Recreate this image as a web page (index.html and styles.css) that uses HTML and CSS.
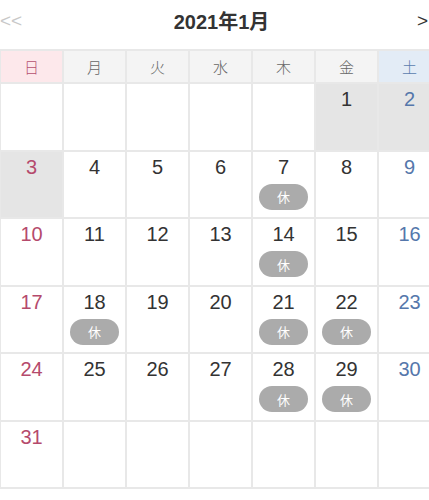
FILE: index.html
```html
<!DOCTYPE html>
<html lang="ja">
<head>
<meta charset="utf-8">
<link rel="stylesheet" href="styles.css">
</head>
<body>
<div class="page">
  <div class="nav">
    <span class="prev">&lt;&lt;</span>
    <span class="title">2021年1月</span>
    <span class="next">&gt;</span>
  </div>
  <div class="cal">
    <div class="wd sun">日</div>
    <div class="wd">月</div>
    <div class="wd">火</div>
    <div class="wd">水</div>
    <div class="wd">木</div>
    <div class="wd">金</div>
    <div class="wd sat">土</div>

    <div class="day"></div>
    <div class="day"></div>
    <div class="day"></div>
    <div class="day"></div>
    <div class="day"></div>
    <div class="day gray"><span class="n">1</span></div>
    <div class="day gray sat"><span class="n">2</span></div>

    <div class="day gray sun"><span class="n">3</span></div>
    <div class="day"><span class="n">4</span></div>
    <div class="day"><span class="n">5</span></div>
    <div class="day"><span class="n">6</span></div>
    <div class="day"><span class="n">7</span><span class="off">休</span></div>
    <div class="day"><span class="n">8</span></div>
    <div class="day sat"><span class="n">9</span></div>

    <div class="day sun"><span class="n">10</span></div>
    <div class="day"><span class="n">11</span></div>
    <div class="day"><span class="n">12</span></div>
    <div class="day"><span class="n">13</span></div>
    <div class="day"><span class="n">14</span><span class="off">休</span></div>
    <div class="day"><span class="n">15</span></div>
    <div class="day sat"><span class="n">16</span></div>

    <div class="day sun"><span class="n">17</span></div>
    <div class="day"><span class="n">18</span><span class="off">休</span></div>
    <div class="day"><span class="n">19</span></div>
    <div class="day"><span class="n">20</span></div>
    <div class="day"><span class="n">21</span><span class="off">休</span></div>
    <div class="day"><span class="n">22</span><span class="off">休</span></div>
    <div class="day sat"><span class="n">23</span></div>

    <div class="day sun"><span class="n">24</span></div>
    <div class="day"><span class="n">25</span></div>
    <div class="day"><span class="n">26</span></div>
    <div class="day"><span class="n">27</span></div>
    <div class="day"><span class="n">28</span><span class="off">休</span></div>
    <div class="day"><span class="n">29</span><span class="off">休</span></div>
    <div class="day sat"><span class="n">30</span></div>

    <div class="day sun"><span class="n">31</span></div>
    <div class="day"></div>
    <div class="day"></div>
    <div class="day"></div>
    <div class="day"></div>
    <div class="day"></div>
    <div class="day"></div>
  </div>
</div>
</body>
</html>
```

FILE: styles.css
```css
html, body {
  margin: 0;
  padding: 0;
  background: #fff;
  overflow: hidden;
}
body {
  font-family: "Liberation Sans", "Noto Sans CJK JP", sans-serif;
  color: #333;
}
.page {
  width: 429px;
  overflow: hidden;
}
.nav {
  height: 49px;
  display: flex;
  align-items: center;
  justify-content: space-between;
  padding: 0 1px 8px 0;
  box-sizing: border-box;
}
.prev {
  color: #c8c8c8;
  font-size: 19px;
}
.title {
  font-weight: bold;
  font-size: 20px;
  color: #333;
  margin-left: 4px;
}
.next {
  color: #333;
  font-size: 19px;
}
.cal {
  display: grid;
  grid-template-columns: repeat(7, 61px);
  grid-template-rows: 31px;
  grid-auto-rows: 65.5px;
  gap: 2px;
  padding: 2px 0 2px 1px;
  width: max-content;
  background: #e8e8e8;
}
.wd {
  background: #f4f4f4;
  display: flex;
  align-items: center;
  justify-content: center;
  font-size: 15px;
  color: #666;
  font-family: "Noto Sans CJK JP", sans-serif;
  font-weight: 300;
}
.wd.sun {
  background: #fde8eb;
  color: #b5506f;
}
.wd.sat {
  background: #e3ecf6;
  color: #5a7cae;
}
.day {
  background: #fff;
  display: flex;
  flex-direction: column;
  align-items: center;
}
.day.gray {
  background: #e5e5e5;
}
.n {
  font-size: 20px;
  line-height: 24px;
  padding-top: 3px;
  color: #333;
}
.day.sun .n {
  color: #b54a6c;
}
.day.sat .n {
  color: #5577ab;
}
.off {
  margin-top: 5px;
  width: 49px;
  height: 26px;
  border-radius: 13px;
  background: #ababab;
  color: #fff;
  font-size: 13px;
  display: flex;
  align-items: center;
  justify-content: center;
  font-family: "Noto Sans CJK JP", sans-serif;
}
```
